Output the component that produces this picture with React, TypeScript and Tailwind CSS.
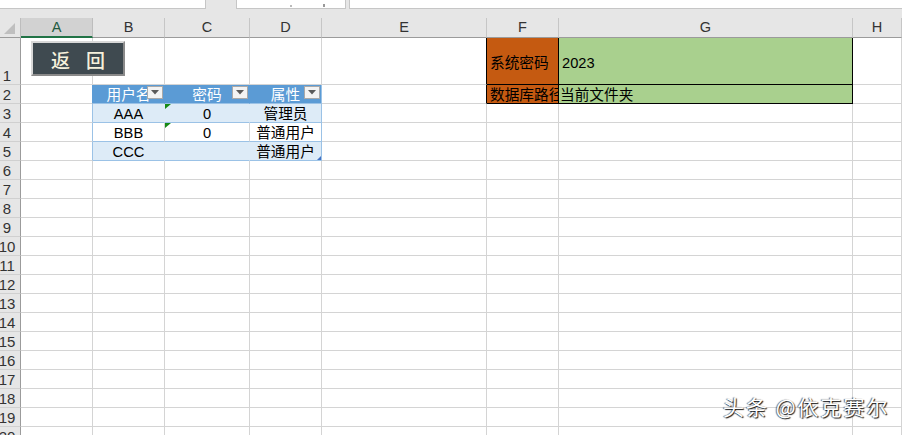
import React from "react";

const FONT = "font-['Liberation_Sans','Noto_Sans_CJK_SC',sans-serif]";
const GRID = "border-r border-b border-[#d4d4d4]";
const COLS = ["A", "B", "C", "D", "E", "F", "G", "H"];

function Dropdown() {
  return (
    <div className="absolute right-[1px] top-[1px] w-[16px] h-[13px] bg-[#f3f3f3] border border-[#a9a9a9] flex items-center justify-center">
      <svg width="8" height="5" viewBox="0 0 8 5">
        <polygon points="0,0 8,0 4,4.5" fill="#5a5a5a" />
      </svg>
    </div>
  );
}

function GreenTri() {
  return (
    <svg className="absolute left-0 top-0" width="6" height="6" viewBox="0 0 6 6">
      <polygon points="0,0 6,0 0,5" fill="#178a17" />
    </svg>
  );
}

function RowHead({ n }: { n: number }) {
  return (
    <div className="bg-[#e6e6e6] border-r border-b border-r-[#9b9b9b] border-b-[#d0d0d0] flex items-end text-[#333] text-[15px] leading-[16px]">
      <div className="w-[14px] flex justify-center whitespace-nowrap">{n}</div>
    </div>
  );
}

const dataCell = "flex items-end justify-center leading-[16px] whitespace-nowrap";

export default function App() {
  const emptyRows = Array.from({ length: 15 }, (_, i) => i + 6);
  return (
    <div className={`relative w-[902px] h-[435px] overflow-hidden bg-white ${FONT} text-[14.67px] text-black`}>
      {/* formula bar remnants */}
      <div className="flex h-[9px] bg-[#e6e6e6]">
        <div className="w-[206px] bg-white border-r border-b border-[#c6c6c6]" />
        <div className="w-[30px]" />
        <div className="w-[110px] bg-white border-l border-r border-b border-[#c6c6c6] relative">
          <div className="absolute left-[53px] bottom-[1px] w-[2px] h-[2px] bg-[#bbb]" />
          <div className="absolute left-[86px] bottom-[1px] w-[2px] h-[3px] bg-[#999]" />
        </div>
        <div className="w-[3px]" />
        <div className="flex-1 bg-white border-l border-b border-[#c6c6c6]" />
      </div>
      <div className="h-[9px] bg-[#e6e6e6]" />

      <div className="grid grid-cols-[21px_72px_72px_85px_72px_165px_72px_294px_49px] grid-rows-[20px_47px_repeat(19,19px)]">
        {/* column headers */}
        <div className="bg-[#e6e6e6] border-r border-b border-r-[#bdbdbd] border-b-[#9b9b9b] flex items-end justify-center pb-[2px]">
          <svg width="12" height="12" viewBox="0 0 12 12">
            <polygon points="11,0 11,11 0,11" fill="#bfbfbf" />
          </svg>
        </div>
        {COLS.map((c) =>
          c === "A" ? (
            <div key={c} className="bg-[#d2d2d2] border-r border-b-2 border-r-[#bdbdbd] border-b-[#217346] flex items-end justify-center text-[14.5px] leading-[18px] text-[#1f5a40]">
              {c}
            </div>
          ) : (
            <div key={c} className="bg-[#e6e6e6] border-r border-b border-r-[#c6c6c6] border-b-[#9b9b9b] flex items-end justify-center pb-[1px] text-[14.5px] leading-[18px] text-[#333]">
              {c}
            </div>
          )
        )}

        {/* row 1 */}
        <RowHead n={1} />
        <div className={GRID} />
        <div className={GRID} />
        <div className={GRID} />
        <div className={GRID} />
        <div className="border-r border-b border-r-black border-b-[#d4d4d4]" />
        <div className="bg-[#c55a11] border-r border-b border-black flex items-center pt-[3px] pl-[3px] whitespace-nowrap">系统密码</div>
        <div className="bg-[#a9d08e] border-r border-b border-black flex items-center pt-[3px] pl-[3px]">2023</div>
        <div className={GRID} />

        {/* row 2 */}
        <RowHead n={2} />
        <div className="border-r border-b border-r-[#5b9bd5] border-b-[#d4d4d4]" />
        <div className={`relative bg-[#5b9bd5] border-r border-b border-r-[#5b9bd5] border-b-[#9bc2e6] text-white ${dataCell}`}>
          用户名
          <Dropdown />
        </div>
        <div className={`relative bg-[#5b9bd5] border-r border-b border-r-[#5b9bd5] border-b-[#9bc2e6] text-white ${dataCell}`}>
          密码
          <Dropdown />
        </div>
        <div className={`relative bg-[#5b9bd5] border-r border-b border-r-[#9bc2e6] border-b-[#9bc2e6] text-white ${dataCell}`}>
          属性
          <Dropdown />
        </div>
        <div className="border-r border-b border-r-black border-b-[#d4d4d4]" />
        <div className="bg-[#c55a11] border-r border-b border-black flex items-end pl-[3px] leading-[16px] whitespace-nowrap overflow-hidden">数据库路径</div>
        <div className="bg-[#a9d08e] border-r border-b border-black flex items-end pl-[1px] leading-[16px] whitespace-nowrap">当前文件夹</div>
        <div className={GRID} />

        {/* row 3 */}
        <RowHead n={3} />
        <div className="border-r border-b border-r-[#9bc2e6] border-b-[#d4d4d4]" />
        <div className={`bg-[#ddebf7] border-r border-b border-r-[#ddebf7] border-b-[#9bc2e6] ${dataCell}`}>AAA</div>
        <div className={`relative bg-[#ddebf7] border-r border-b border-r-[#ddebf7] border-b-[#9bc2e6] ${dataCell}`}>
          <GreenTri />0
        </div>
        <div className={`bg-[#ddebf7] border-r border-b border-[#9bc2e6] ${dataCell}`}>管理员</div>
        <div className={GRID} />
        <div className={GRID} />
        <div className={GRID} />
        <div className={GRID} />

        {/* row 4 */}
        <RowHead n={4} />
        <div className="border-r border-b border-r-[#9bc2e6] border-b-[#d4d4d4]" />
        <div className={`border-r border-b border-r-[#d4d4d4] border-b-[#9bc2e6] ${dataCell}`}>BBB</div>
        <div className={`relative border-r border-b border-r-[#d4d4d4] border-b-[#9bc2e6] ${dataCell}`}>
          <GreenTri />0
        </div>
        <div className={`border-r border-b border-[#9bc2e6] ${dataCell}`}>普通用户</div>
        <div className={GRID} />
        <div className={GRID} />
        <div className={GRID} />
        <div className={GRID} />

        {/* row 5 */}
        <RowHead n={5} />
        <div className="border-r border-b border-r-[#9bc2e6] border-b-[#d4d4d4]" />
        <div className={`bg-[#ddebf7] border-r border-b border-r-[#ddebf7] border-b-[#9bc2e6] ${dataCell}`}>CCC</div>
        <div className={`bg-[#ddebf7] border-r border-b border-r-[#ddebf7] border-b-[#9bc2e6] ${dataCell}`} />
        <div className={`relative bg-[#ddebf7] border-r border-b border-[#9bc2e6] ${dataCell}`}>
          普通用户
          <svg className="absolute right-0 bottom-0" width="4" height="4" viewBox="0 0 4 4">
            <polygon points="4,0 4,4 0,4" fill="#4472c4" />
          </svg>
        </div>
        <div className={GRID} />
        <div className={GRID} />
        <div className={GRID} />
        <div className={GRID} />

        {emptyRows.map((r) => (
          <React.Fragment key={r}>
            <RowHead n={r} />
            {COLS.map((c) => (
              <div key={c} className={GRID} />
            ))}
          </React.Fragment>
        ))}
      </div>

      {/* floating button shape */}
      <div className="absolute left-[31px] top-[41px] w-[94px] h-[35px] bg-[#3f4a50] border-2 border-t-[#d8d8d8] border-l-[#d8d8d8] border-r-[#8a8a8a] border-b-[#8a8a8a] flex items-center justify-center gap-[16px] pt-[1px] font-['Noto_Sans_CJK_SC',sans-serif] font-medium text-[19px] leading-none text-[#f6f1dc]">
        <span>返</span>
        <span>回</span>
      </div>

      {/* watermark */}
      <div className="absolute left-[723px] top-[396px] font-['Noto_Sans_CJK_SC',sans-serif] text-[21px] tracking-[2px] leading-none text-white whitespace-nowrap [text-shadow:1px_1px_1px_rgba(0,0,0,0.9),-1px_0_1px_rgba(0,0,0,0.6)]">
        头条 @依克赛尔
      </div>
    </div>
  );
}
